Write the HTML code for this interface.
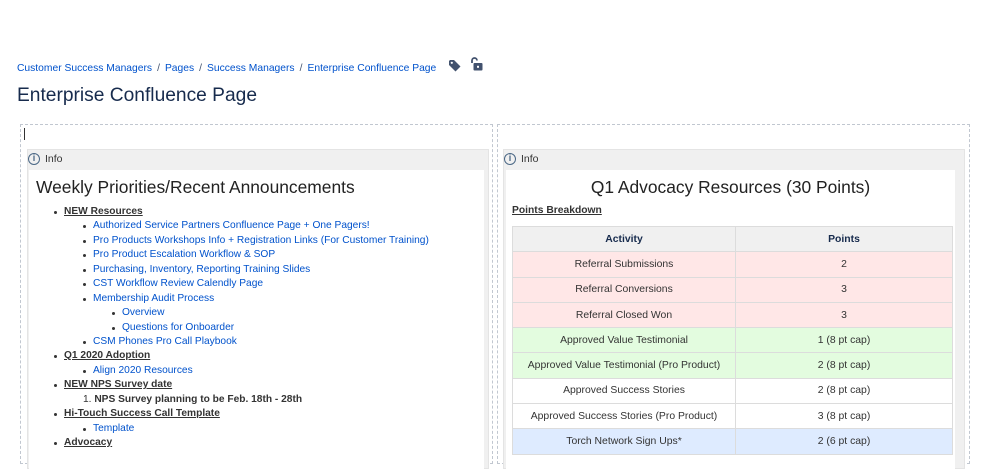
<!DOCTYPE html>
<html><head><meta charset="utf-8"><style>
*{margin:0;padding:0;box-sizing:border-box}
body{width:999px;height:451px;overflow:hidden;background:#fff;font-family:"Liberation Sans",Arial,sans-serif;color:#172b4d;position:relative}
.a{position:absolute;white-space:nowrap}
.bc{top:63px;left:17px;font-size:10.3px;color:#0052cc}
.bc span{color:#42526e;margin:0 5px}
h1{position:absolute;top:85px;left:17px;font-size:19.2px;font-weight:400;color:#172b4d}
.dash{position:absolute;border:1px dashed #c1c7d0;top:124px;height:340px}
.info{position:absolute;background:#f0f0f0;border:1px solid #e4e4e4;top:149px;height:320px}
.inner{position:absolute;background:#fff;top:170px;height:300px}
.il{font-size:10.5px;color:#333}
.ic{width:12px;height:12px;border:1.3px solid #4a6785;border-radius:50%;font-size:9px;font-weight:bold;color:#4a6785;text-align:center;line-height:9px}
.l{font-size:10.2px;line-height:14px}
.l a{color:#0052cc;text-decoration:none}
.b{font-weight:bold;text-decoration:underline;color:#333}
.d{position:absolute;width:3px;height:3px;background:#333;border-radius:50%}
table{position:absolute;left:512px;top:226px;width:441px;border-collapse:collapse;font-size:10.4px;color:#333}
td,th{border:1px solid #dcdcdc;text-align:center;height:25.3px}
th{background:#f0f0f0;color:#172b4d;font-weight:bold}
.r td{background:#ffe7e7}.g td{background:#e3fcdf}.w td{background:#fff}.bl td{background:#deebff}
</style></head><body>
<div class="a bc">Customer Success Managers<span>/</span>Pages<span>/</span>Success Managers<span>/</span>Enterprise Confluence Page</div>
<svg class="a" style="left:448px;top:59px" width="14" height="14" viewBox="0 0 14 14"><path d="M1 2v4l6.5 6.5 5-5L6 1H2z" fill="#42526e"/><circle cx="3.8" cy="3.8" r="1.1" fill="#fff"/></svg>
<svg class="a" style="left:470px;top:57px" width="14" height="15" viewBox="0 0 14 15"><path d="M2 6V3.5a2.5 2.5 0 0 1 5 0" stroke="#42526e" stroke-width="1.8" fill="none"/><rect x="3.5" y="6" width="9" height="7.5" rx="1" fill="#42526e"/><rect x="7" y="8.8" width="2" height="2" fill="#fff"/></svg>
<h1>Enterprise Confluence Page</h1>

<div class="dash" style="left:20px;width:473px"></div>
<div class="dash" style="left:497px;width:473px"></div>
<div class="a" style="left:24px;top:128px;width:1px;height:12px;background:#333"></div>

<div class="info" style="left:27px;width:462px"></div>
<div class="inner" style="left:29px;width:455px"></div>
<div class="a ic" style="left:28px;top:153px">i</div>
<div class="a il" style="left:45px;top:153px">Info</div>

<div class="info" style="left:503px;width:462px"></div>
<div class="inner" style="left:506px;width:449px"></div>
<div class="a ic" style="left:504px;top:153px">i</div>
<div class="a il" style="left:521px;top:153px">Info</div>

<div class="a" style="left:36px;top:177px;font-size:17.4px;color:#222">Weekly Priorities/Recent Announcements</div>

<div class="a l" style="left:64px;top:205px"><span class="b">NEW Resources</span></div>
<div class="a l" style="left:93px;top:219px"><a>Authorized Service Partners Confluence Page + One Pagers!</a></div>
<div class="a l" style="left:93px;top:234px"><a>Pro Products Workshops Info + Registration Links (For Customer Training)</a></div>
<div class="a l" style="left:93px;top:248px"><a>Pro Product Escalation Workflow &amp; SOP</a></div>
<div class="a l" style="left:93px;top:263px"><a>Purchasing, Inventory, Reporting Training Slides</a></div>
<div class="a l" style="left:93px;top:277px"><a>CST Workflow Review Calendly Page</a></div>
<div class="a l" style="left:93px;top:292px"><a>Membership Audit Process</a></div>
<div class="a l" style="left:122px;top:306px"><a>Overview</a></div>
<div class="a l" style="left:122px;top:321px"><a>Questions for Onboarder</a></div>
<div class="a l" style="left:93px;top:335px"><a>CSM Phones Pro Call Playbook</a></div>
<div class="a l" style="left:64px;top:349px"><span class="b">Q1 2020 Adoption</span></div>
<div class="a l" style="left:93px;top:364px"><a>Align 2020 Resources</a></div>
<div class="a l" style="left:64px;top:378px"><span class="b">NEW NPS Survey date</span></div>
<div class="a l" style="left:83px;top:393px;color:#333">1. <b>NPS Survey planning to be Feb. 18th - 28th</b></div>
<div class="a l" style="left:64px;top:407px"><span class="b">Hi-Touch Success Call Template</span></div>
<div class="a l" style="left:93px;top:422px"><a>Template</a></div>
<div class="a l" style="left:64px;top:436px"><span class="b">Advocacy</span></div>

<div class="d" style="left:54px;top:211px"></div>
<div class="d" style="left:83px;top:225px"></div>
<div class="d" style="left:83px;top:240px"></div>
<div class="d" style="left:83px;top:254px"></div>
<div class="d" style="left:83px;top:269px"></div>
<div class="d" style="left:83px;top:283px"></div>
<div class="d" style="left:83px;top:298px"></div>
<div class="d" style="left:112px;top:312px"></div>
<div class="d" style="left:112px;top:327px"></div>
<div class="d" style="left:83px;top:341px"></div>
<div class="d" style="left:54px;top:355px"></div>
<div class="d" style="left:83px;top:370px"></div>
<div class="d" style="left:54px;top:384px"></div>
<div class="d" style="left:54px;top:413px"></div>
<div class="d" style="left:83px;top:428px"></div>
<div class="d" style="left:54px;top:442px"></div>

<div class="a" style="left:506px;width:449px;top:177px;text-align:center;font-size:17.4px;color:#222">Q1 Advocacy Resources (30 Points)</div>
<div class="a" style="left:512px;top:205px;font-size:10.3px;font-weight:bold;text-decoration:underline;color:#333">Points Breakdown</div>
<table>
<tr><th style="width:223px">Activity</th><th>Points</th></tr>
<tr class="r"><td>Referral Submissions</td><td>2</td></tr>
<tr class="r"><td>Referral Conversions</td><td>3</td></tr>
<tr class="r"><td>Referral Closed Won</td><td>3</td></tr>
<tr class="g"><td>Approved Value Testimonial</td><td>1 (8 pt cap)</td></tr>
<tr class="g"><td>Approved Value Testimonial (Pro Product)</td><td>2 (8 pt cap)</td></tr>
<tr class="w"><td>Approved Success Stories</td><td>2 (8 pt cap)</td></tr>
<tr class="w"><td>Approved Success Stories (Pro Product)</td><td>3 (8 pt cap)</td></tr>
<tr class="bl"><td>Torch Network Sign Ups*</td><td>2 (6 pt cap)</td></tr>
</table>
</body></html>
